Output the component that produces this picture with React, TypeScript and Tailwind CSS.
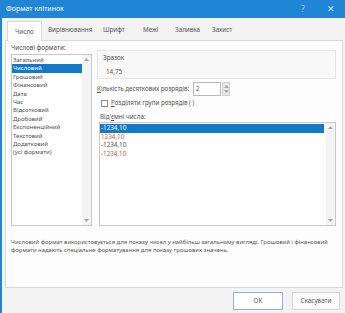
import React from "react";

const formats = [
  "Загальний",
  "Числовий",
  "Грошовий",
  "Фінансовий",
  "Дата",
  "Час",
  "Відсотковий",
  "Дробовий",
  "Експоненційний",
  "Текстовий",
  "Додатковий",
  "(усі формати)",
];

const negatives = [
  { text: "-1234,10", red: false },
  { text: "1234,10", red: true },
  { text: "-1234,10", red: false },
  { text: "-1234,10", red: true },
];

function Arrow({ up }: { up?: boolean }) {
  return (
    <svg width="5" height="3" viewBox="0 0 5 3">
      <path d={up ? "M0 3 L2.5 0 L5 3 Z" : "M0 0 L2.5 3 L5 0 Z"} fill="#a6a6a6" />
    </svg>
  );
}

function ScrollBar() {
  return (
    <div className="w-[9px] h-full bg-[#f3f3f3] flex flex-col items-center justify-between py-[3px]">
      <Arrow up />
      <Arrow />
    </div>
  );
}

export default function App() {
  return (
    <div className="w-[345px] h-[313px] bg-[#1f85d4] flex flex-col overflow-hidden font-['Noto_Sans',sans-serif] text-[#505050]">
      {/* Title bar */}
      <div className="h-[18px] flex items-center pl-[6px] text-white text-[7px]">
        <span>Формат клітинок</span>
        <span className="ml-auto w-[10px] text-center text-[8px] text-[#a9d2f2]">?</span>
        <span className="ml-[18px] mr-[9px] w-[10px] text-center text-[9px] text-[#d6ebfa]">✕</span>
      </div>

      {/* Body */}
      <div className="flex-1 ml-[2px] bg-[#f3f3f3] flex flex-col">
        {/* Tabs */}
        <div className="h-[22px] flex items-end pl-[5px] text-[6.3px] text-[#555]">
          <div className="h-[20px] w-[35px] -mb-px bg-white border border-b-0 border-[#dadada] pl-[7px] flex items-center relative z-10">
            Число
          </div>
          <div className="h-[20px] flex items-center ml-[6px] w-[55px]">Вирівнювання</div>
          <div className="h-[20px] flex items-center w-[40px]">Шрифт</div>
          <div className="h-[20px] flex items-center w-[32px]">Межі</div>
          <div className="h-[20px] flex items-center w-[37px]">Заливка</div>
          <div className="h-[20px] flex items-center">Захист</div>
        </div>

        {/* Panel */}
        <div className="h-[248px] ml-[3px] mr-[2px] bg-[#fdfdfd] border border-[#dadada] pl-[5px] pt-[2px] flex flex-col">
          <div className="flex items-start">
            {/* Left column */}
            <div className="w-[81px] flex flex-col">
              <div className="h-[9px] leading-[9px] text-[6.3px]">Числові формати:</div>
              <div className="mt-[2px] h-[172px] border border-[#c9c9c9] bg-white flex">
                <div className="flex-1 pt-[1px] text-[6px]">
                  {formats.map((f, i) => (
                    <div
                      key={f}
                      className={
                        i === 1
                          ? "h-[8.4px] leading-[8.4px] pl-[1px] bg-[#1379c9] text-white"
                          : "h-[8.4px] leading-[8.4px] pl-[1px]"
                      }
                    >
                      {f}
                    </div>
                  ))}
                </div>
                <ScrollBar />
              </div>
            </div>

            {/* Right column */}
            <div className="ml-[5px] w-[239px] mt-[7px] flex flex-col">
              <div className="h-[29px] border border-[#e6e6e6] bg-[#f8f8f8] flex flex-col text-[6.3px]">
                <div className="pl-[5px] mt-[2px] h-[9px] leading-[9px]">Зразок</div>
                <div className="pl-[8px] mt-[5px] h-[9px] leading-[9px]">14,75</div>
              </div>

              <div className="mt-[3px] h-[14px] flex items-center text-[6.2px]">
                <span className="w-[96px] whitespace-nowrap">
                  <span className="underline">К</span>ількість десяткових розрядів:
                </span>
                <div className="w-[28px] h-[14px] border border-[#b9b9b9] bg-white pl-[2px] flex items-center">
                  2
                </div>
                <div className="ml-[1px] w-[8px] h-[14px] bg-[#e9e9e9] border border-[#d0d0d0] flex flex-col items-center justify-around py-[1px]">
                  <Arrow up />
                  <Arrow />
                </div>
              </div>

              <div className="mt-[3px] h-[8px] flex items-center pl-[4px] text-[6.2px]">
                <div className="w-[7px] h-[7px] border border-[#8a8a8a] bg-white" />
                <span className="ml-[3px]">
                  <span className="underline">Р</span>озділяти групи розрядів ( )
                </span>
              </div>

              <div className="mt-[5px] pl-[3px] h-[9px] leading-[9px] text-[6.3px]">
                Від'<span className="underline">є</span>мні числа:
              </div>

              <div className="mt-[1px] ml-[2px] w-[237px] h-[104px] border border-[#c9c9c9] bg-white flex">
                <div className="flex-1 pt-[1px] pr-[2px] text-[6.3px]">
                  {negatives.map((n, i) => (
                    <div
                      key={i}
                      className={
                        i === 0
                          ? "h-[8.6px] leading-[8.6px] pl-[1px] bg-[#1379c9] text-white"
                          : n.red
                          ? "h-[8.6px] leading-[8.6px] pl-[1px] text-[#e2503a]"
                          : "h-[8.6px] leading-[8.6px] pl-[1px]"
                      }
                    >
                      {n.text}
                    </div>
                  ))}
                </div>
                <ScrollBar />
              </div>
            </div>
          </div>

          <div className="mt-[12px] text-[5.9px] leading-[8px] text-[#555] whitespace-nowrap">
            Числовий формат використовується для показу чисел у найбільш загальному вигляді. Грошовий і фінансовий
            <br />
            формати надають спеціальне форматування для показу грошових значень.
          </div>
        </div>

        {/* Footer */}
        <div className="flex-1 flex items-center justify-end pr-[5px] gap-[9px] text-[6.3px] text-[#555]">
          <button className="w-[50px] h-[18px] bg-white border border-[#8fb3d6] flex items-center justify-center">
            OK
          </button>
          <button className="w-[48px] h-[18px] bg-[#fbfbfb] border border-[#d6d6d6] flex items-center justify-center">
            Скасувати
          </button>
        </div>
      </div>
    </div>
  );
}
